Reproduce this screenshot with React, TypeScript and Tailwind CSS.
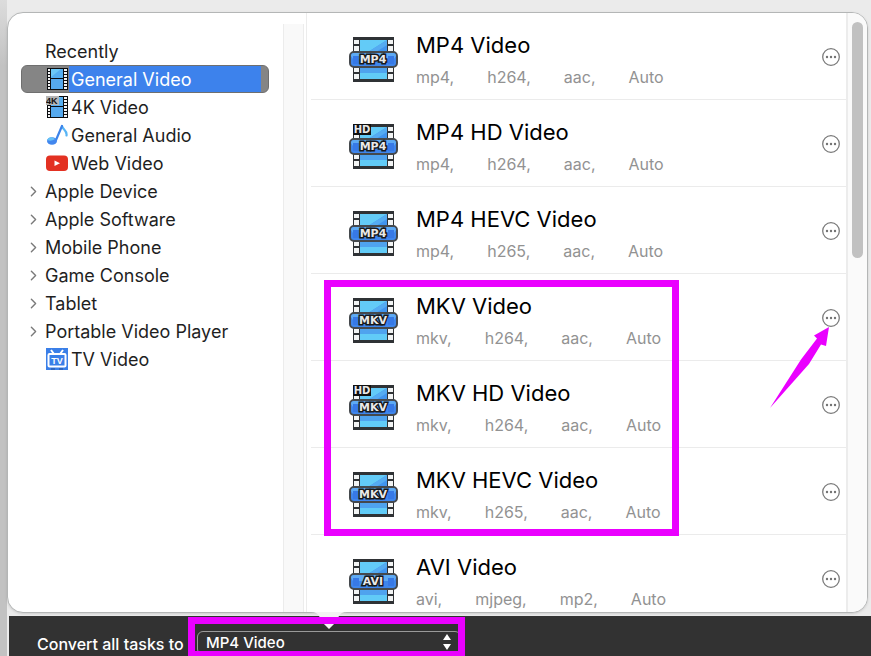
import clsx from "clsx";
import type { ReactNode } from "react";
import { IoChevronForward } from "react-icons/io5";

interface Format {
  title: string;
  label: string;
  hd?: boolean;
  specs: string[];
}

interface Category {
  name: string;
  icon?: ReactNode;
  expandable?: boolean;
  selected?: boolean;
}

const mp4Formats: Format[] = [
  { title: "MP4 Video", label: "MP4", specs: ["mp4,", "h264,", "aac,", "Auto"] },
  { title: "MP4 HD Video", label: "MP4", hd: true, specs: ["mp4,", "h264,", "aac,", "Auto"] },
  { title: "MP4 HEVC Video", label: "MP4", specs: ["mp4,", "h265,", "aac,", "Auto"] },
];

const mkvFormats: Format[] = [
  { title: "MKV Video", label: "MKV", specs: ["mkv,", "h264,", "aac,", "Auto"] },
  { title: "MKV HD Video", label: "MKV", hd: true, specs: ["mkv,", "h264,", "aac,", "Auto"] },
  { title: "MKV HEVC Video", label: "MKV", specs: ["mkv,", "h265,", "aac,", "Auto"] },
];

const aviFormats: Format[] = [
  { title: "AVI Video", label: "AVI", specs: ["avi,", "mjpeg,", "mp2,", "Auto"] },
];

const FilmIcon = ({ is4K }: { is4K?: boolean }) => (
  <svg width="22" height="22" viewBox="0 0 22 22" aria-hidden="true">
    <rect x="1" width="21" height="22" fill="#0b0d10" />
    <rect x="5" y="1" width="12" height="9" fill="#55aef0" />
    <path d="M5 1h10L5 9z" fill="#6cc8f7" />
    <rect x="5" y="11" width="12" height="10" fill="#55a9ee" />
    {[1, 4, 7, 10, 13, 16, 19].map((y) => (
      <g key={y} fill="#f4f4f4">
        <rect x="2" y={y} width="2" height="2" />
        <rect x="18" y={y} width="3" height="2" />
      </g>
    ))}
    {is4K && (
      <>
        <rect width="13" height="9" fill="#b5b5b5" />
        <text x="0" y="8" fontSize="9" fontWeight="700" fontFamily="Liberation Sans, sans-serif" fill="#111">4K</text>
      </>
    )}
  </svg>
);

const NoteIcon = () => (
  <svg width="22" height="22" viewBox="0 0 22 22" aria-hidden="true">
    <path d="M16 2c.5 3.500 5.500 4.500 4.500 9.500" fill="none" stroke="#58b5f5" strokeWidth="2.200" strokeLinecap="round" />
    <path d="M10 16 16 2" stroke="#3c83ea" strokeWidth="2.200" strokeLinecap="round" />
    <ellipse cx="6" cy="17" rx="5" ry="3.800" fill="#4287ee" />
    <path d="M1 16c1-3 5-4 8-1-3 2-5 2-8 1z" fill="#66c1f7" />
  </svg>
);

const WebIcon = () => (
  <svg width="22" height="22" viewBox="0 0 22 22" aria-hidden="true">
    <rect x="0" y="3.500" width="22" height="15.500" rx="4" fill="#e33122" />
    <path d="M8.500 8.500v5.500l5.500-2.750z" fill="#fff" />
  </svg>
);

const TvIcon = () => (
  <svg width="22" height="22" viewBox="0 0 22 22" aria-hidden="true">
    <rect width="22" height="22" fill="#3a7fe8" />
    <path d="m5 2 3 4M17 2l-3 4" stroke="#fff" strokeWidth="2" />
    <rect x="2.500" y="6" width="17" height="12.500" rx="1" fill="none" stroke="#fff" strokeWidth="2" />
    <path d="M5 21h4M13 21h4" stroke="#274f91" />
    <text x="11" y="16" textAnchor="middle" fontSize="9" fontWeight="700" fontFamily="Liberation Sans, sans-serif" fill="#fff">TV</text>
  </svg>
);

const categories: Category[] = [
  { name: "Recently" },
  { name: "General Video", icon: <FilmIcon />, selected: true },
  { name: "4K Video", icon: <FilmIcon is4K /> },
  { name: "General Audio", icon: <NoteIcon /> },
  { name: "Web Video", icon: <WebIcon /> },
  { name: "Apple Device", expandable: true },
  { name: "Apple Software", expandable: true },
  { name: "Mobile Phone", expandable: true },
  { name: "Game Console", expandable: true },
  { name: "Tablet", expandable: true },
  { name: "Portable Video Player", expandable: true },
  { name: "TV Video", icon: <TvIcon /> },
];

const FormatIcon = ({ label, hd }: { label: string; hd?: boolean }) => (
  <svg width="49" height="45" viewBox="0 0 49 45" className="shrink-0" aria-hidden="true">
    <rect x="4" width="41" height="45" fill="#2f3235" />
    {/* Film frames */}
    <rect x="11" y="3" width="27" height="12" fill="#63cbf7" />
    <path d="M38 3v12H19z" fill="#4194ee" />
    <path d="M38 3v5L27 15h-8z" fill="#55abf1" />
    <rect x="11" y="30" width="27" height="12" fill="#4fa3ee" />
    <rect x="11" y="36" width="27" height="6" fill="#61cbf7" />
    {[5, 39].map((x) => (
      <g key={x} fill="#f2f4f4">
        <rect x={x} y="3" width="5" height="4" />
        <rect x={x} y="9" width="5" height="5" />
        <rect x={x} y="31" width="5" height="4" />
        <rect x={x} y="37" width="5" height="5" />
      </g>
    ))}
    {/* Label band */}
    <rect x="1" y="15" width="47" height="15" rx="4" fill="#3f86ec" stroke="#45494d" strokeWidth="2" />
    <path d="M2 19q0-3 3-3h39q3 0 3 3l-2 3H4z" fill="#5eaaf3" />
    <rect x="4" y="19" width="6" height="8" fill="#3779e6" />
    <rect x="39" y="19" width="6" height="8" fill="#3779e6" />
    <text x="24" y="26" textAnchor="middle" fontSize="11" fontWeight="700" fontFamily="DejaVu Sans, sans-serif" fill="#e9e9e9" stroke="#17191c" strokeWidth="3" paintOrder="stroke">{label}</text>
    {hd && (
      <>
        <rect x="4" width="18" height="11" fill="#111" />
        <text x="13" y="9" textAnchor="middle" fontSize="10" fontWeight="700" fontFamily="DejaVu Sans, sans-serif" fill="#e9e9e9">HD</text>
      </>
    )}
  </svg>
);

const MoreIcon = () => (
  <svg width="18" height="18" viewBox="0 0 18 18" aria-hidden="true">
    <circle cx="9" cy="9" r="8.300" fill="none" stroke="#7b7b7b" strokeWidth="1.300" />
    <circle cx="5" cy="9" r="1.200" fill="#727272" />
    <circle cx="9" cy="9" r="1.200" fill="#727272" />
    <circle cx="13" cy="9" r="1.200" fill="#727272" />
  </svg>
);

const FormatRow = ({ title, label, hd, specs }: Format) => (
  <div className="flex h-[87px] shrink-0 items-center border-b border-[#ebebeb] pl-[38px] pr-[6px] pt-[6px]">
    <FormatIcon label={label} hd={hd} />
    <div className="ml-[18px] min-w-0 flex-1">
      <h3 className="text-[22px] leading-8 text-black">{title}</h3>
      <div className="mt-1 flex gap-[33px] text-[16px] leading-6 text-[#929292]">
        {specs.map((spec) => (
          <span key={spec}>{spec}</span>
        ))}
      </div>
    </div>
    <button type="button" aria-label={`${title} options`} className="mb-1 shrink-0">
      <MoreIcon />
    </button>
  </div>
);

const CategoryRow = ({ name, icon, expandable, selected }: Category) => (
  <button
    type="button"
    className={clsx("flex h-7 w-full items-center rounded-md border text-left text-[18px]", {
      "border-[#6f6f6f] bg-[linear-gradient(90deg,#858585_47px,#3d82ec_47px,#3d82ec_calc(100%_-_7px),#858585_calc(100%_-_7px))] text-white": selected,
      "border-transparent text-[#1f1f1f]": !selected,
    })}
  >
    <span className="flex w-[23px] shrink-0 items-center pl-1">
      {expandable && <IoChevronForward size={15} className="text-[#7a7a7a]" />}
    </span>
    {icon && <span className="ml-px mr-[3px] shrink-0">{icon}</span>}
    <span className="whitespace-nowrap">{name}</span>
  </button>
);

export default function App() {
  return (
    <div className="flex h-screen overflow-hidden bg-[#ebebeb] font-[Inter,'Liberation_Sans',sans-serif]">
      <div className="w-[7px] shrink-0 bg-linear-to-b from-[#dcdcdc] to-[#c2c2c2] to-10%" />
      <div className="flex min-w-0 flex-1 flex-col">
        <main className="mr-[3px] mt-3 flex min-h-0 flex-1 overflow-hidden rounded-2xl border border-[#b4b6b6] bg-white shadow-sm">
          {/* Categories */}
          <nav className="w-[275px] shrink-0 pl-[13px] pr-[14px] pt-6">
            {categories.map((category) => (
              <CategoryRow key={category.name} {...category} />
            ))}
          </nav>
          <div className="mr-[2px] mt-[11px] w-[21px] shrink-0 border-x border-[#ececec] bg-[#f9f9f9]" />

          {/* Formats */}
          <section className="flex min-w-0 flex-1 flex-col overflow-hidden border-l border-[#ececec] pl-1">
            {mp4Formats.map((format) => (
              <FormatRow key={format.title} {...format} />
            ))}
            <div className="relative">
              {mkvFormats.map((format) => (
                <FormatRow key={format.title} {...format} />
              ))}
              <div className="pointer-events-none absolute -bottom-px left-[13px] top-[6px] w-[355px] border-[7px] border-[#ea00ff]" />
              <svg width="60" height="81" viewBox="0 0 60 81" className="pointer-events-none absolute right-4 top-[53px]" aria-hidden="true">
                <path d="M59 0 44 8.500l3 3L31 32.500 0 81 39 37 51 17.500l5 1.500z" fill="#ea00ff" />
              </svg>
            </div>
            {aviFormats.map((format) => (
              <FormatRow key={format.title} {...format} />
            ))}
          </section>

          {/* Scrollbar */}
          <div className="w-[21px] shrink-0 border-l-2 border-[#ececec] bg-[#fafafa] pl-1 pt-[9px]">
            <div className="h-[236px] w-[11px] rounded-full bg-[#c1c1c1]" />
          </div>
        </main>

        <footer className="relative ml-[2px] mt-[3px] flex h-10 shrink-0 items-start bg-[#323232] pl-7 text-white">
          <svg width="36" height="18" viewBox="0 0 36 18" className="absolute -top-1 left-[302px]" aria-hidden="true">
            <path d="M0 0q6 0 8 4l4 7 6 6 6-6 4-7q2-4 8-4z" fill="#f3f3f3" />
          </svg>
          <label htmlFor="output-format" className="pt-4 text-[16px] font-medium leading-6">
            Convert all tasks to
          </label>
          <div className="absolute left-[188px] top-[14px]">
            <select
              id="output-format"
              defaultValue="MP4 Video"
              className="h-6 w-[264px] appearance-none rounded-md border border-[#9a9a9a] bg-[#323232] pl-2 text-[15px] font-medium text-white"
            >
              <option>MP4 Video</option>
              <option>MKV Video</option>
              <option>AVI Video</option>
            </select>
            <svg width="10" height="16" viewBox="0 0 10 16" className="pointer-events-none absolute right-[9px] top-1" aria-hidden="true">
              <path d="M5 0 9 6H1zM5 16 1 10h8z" fill="#fff" />
            </svg>
          </div>
          <div className="pointer-events-none absolute left-[179px] top-px h-[41px] w-[277px] border-[7px] border-[#ea00ff]" />
        </footer>
      </div>
    </div>
  );
}
